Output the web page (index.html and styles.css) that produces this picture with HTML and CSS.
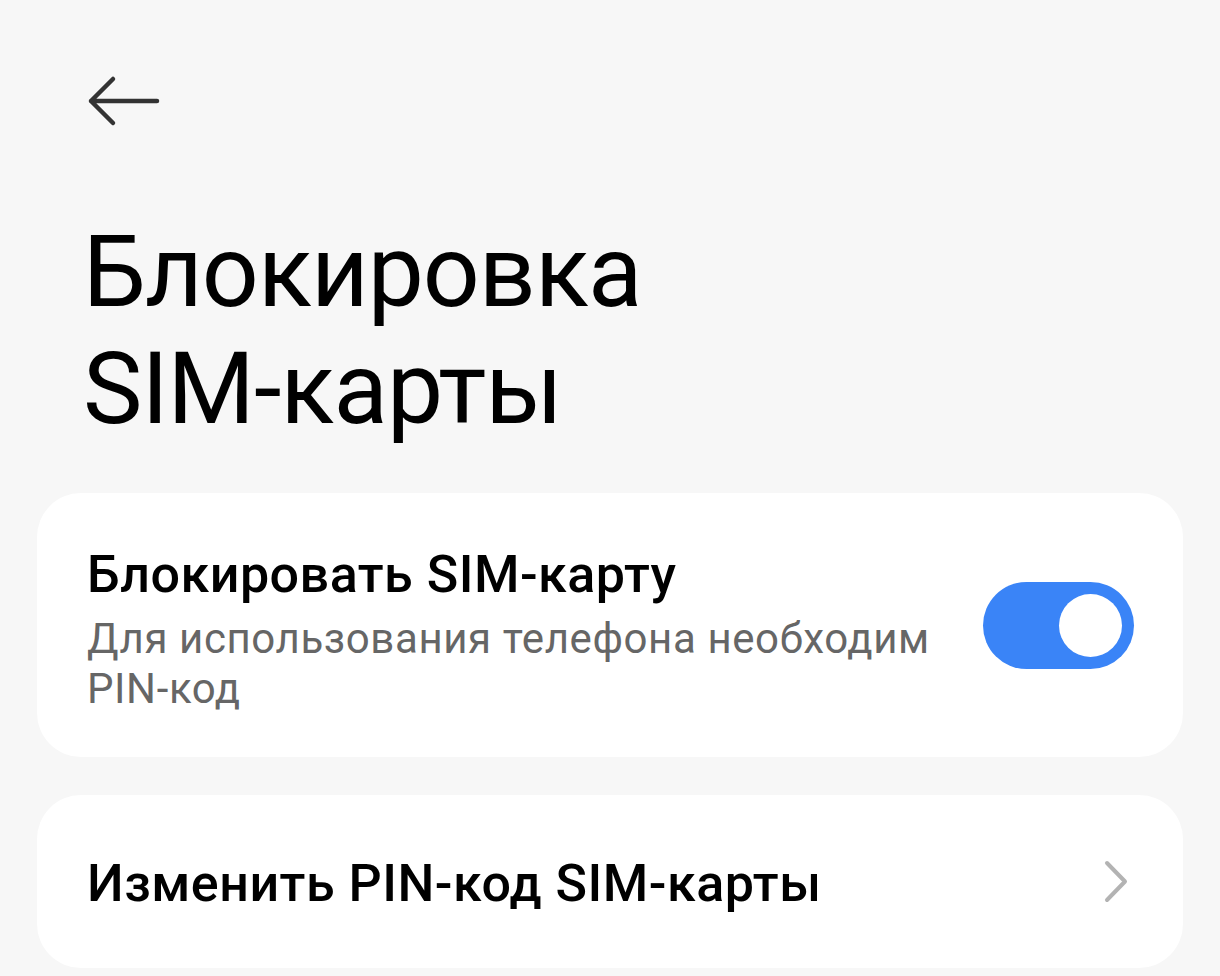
FILE: index.html
```html
<!DOCTYPE html>
<html lang="ru">
<head>
    <meta charset="UTF-8">
    <meta name="viewport" content="width=device-width, initial-scale=1.0">
    <title>Блокировка SIM-карты</title>
    <link rel="stylesheet" href="styles.css">
</head>
<body>
    <div class="topbar">
        <svg class="back" width="90" height="64" viewBox="0 0 90 64">
            <path d="M11 32 H77 M33 10 L11 32 L33 54" fill="none" stroke="#333" stroke-width="4.5" stroke-linecap="round" stroke-linejoin="round"/>
        </svg>
    </div>

    <h1 class="page-title">Блокировка<br>SIM-карты</h1>

    <div class="card card-toggle">
        <div class="card-text">
            <div class="card-title">Блокировать SIM-карту</div>
            <div class="card-sub">Для использования телефона необходим PIN-код</div>
        </div>
        <div class="switch on">
            <div class="knob"></div>
        </div>
    </div>

    <div class="card card-link">
        <div class="card-title">Изменить PIN-код SIM-карты</div>
        <svg class="chevron" width="30" height="44" viewBox="0 0 30 44">
            <path d="M6 3 L24 21.5 L6 40" fill="none" stroke="#b3b3b3" stroke-width="4" stroke-linecap="round" stroke-linejoin="round"/>
        </svg>
    </div>
</body>
</html>
```

FILE: styles.css
```css
body {
    font-family: Roboto, 'Noto Sans', sans-serif;
    background-color: #f7f7f7;
    margin: 0;
    padding: 0;
    color: #000;
}

.topbar {
    padding: 69px 0 0 80px;
    height: 64px;
}

.back {
    display: block;
}

.page-title {
    font-size: 100px;
    font-weight: 400;
    line-height: 117px;
    margin: 80px 0 46px 83px;
    letter-spacing: -1px;
}

.card {
    background-color: #ffffff;
    border-radius: 44px;
    margin: 0 37px;
    display: flex;
    align-items: center;
    justify-content: space-between;
    box-sizing: border-box;
}

.card-toggle {
    padding: 50px 49px 43px 50px;
    height: 264px;
}

.card-link {
    margin-top: 38px;
    padding: 0 52px 0 50px;
    height: 173px;
}

.card-title {
    font-size: 52px;
    font-weight: 500;
    line-height: 62px;
    letter-spacing: 0.5px;
}

.card-link .card-title {
    margin-top: 5px;
}

.card-sub {
    font-size: 42px;
    line-height: 50px;
    color: #666;
    margin-top: 8px;
    max-width: 870px;
    letter-spacing: 0.6px;
}

.switch {
    width: 151px;
    height: 87px;
    border-radius: 44px;
    background-color: #3a84f7;
    position: relative;
    flex-shrink: 0;
    margin-top: -7px;
}

.knob {
    position: absolute;
    width: 63px;
    height: 63px;
    border-radius: 50%;
    background-color: #fff;
    right: 12px;
    top: 12px;
}

.chevron {
    display: block;
    flex-shrink: 0;
}
```
